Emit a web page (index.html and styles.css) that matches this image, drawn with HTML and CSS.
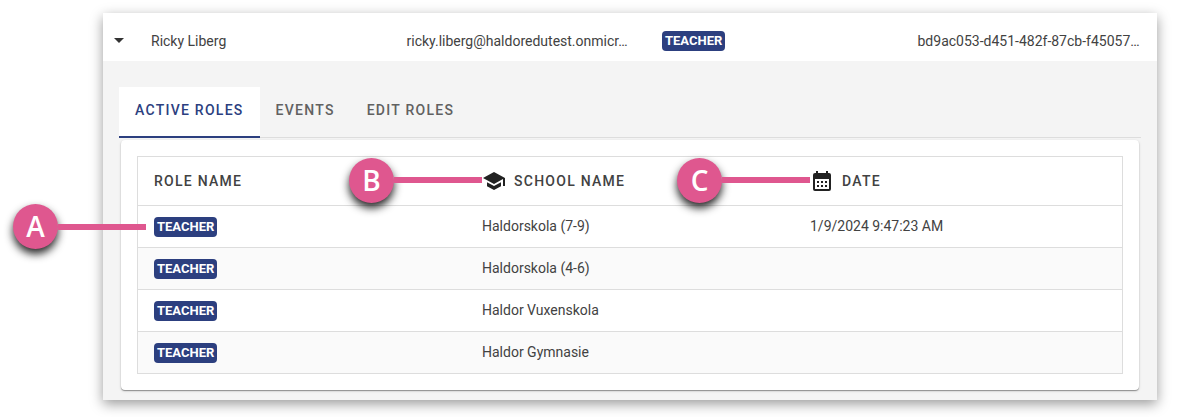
FILE: index.html
```html
<!DOCTYPE html>
<html lang="en">
<head>
  <meta charset="UTF-8">
  <title>User roles</title>
  <link rel="stylesheet" href="styles.css">
</head>
<body>

  <main class="panel">
    <div class="user-row">
      <button class="toggle" aria-label="Collapse user" aria-expanded="true">
        <svg width="10" height="5" viewBox="0 0 10 5"><path d="M0 0h10L5 5z" fill="currentColor"/></svg>
      </button>
      <div class="user-cell">Ricky Liberg</div>
      <div class="user-cell">ricky.liberg@haldoredutest.onmicr…</div>
      <div class="user-cell"><span class="badge">TEACHER</span></div>
      <div class="user-cell">bd9ac053-d451-482f-87cb-f45057…</div>
    </div>

    <div class="details">
      <div class="tabs" role="tablist">
        <button class="tab active" role="tab" aria-selected="true">ACTIVE ROLES</button>
        <button class="tab" role="tab" aria-selected="false">EVENTS</button>
        <button class="tab" role="tab" aria-selected="false">EDIT ROLES</button>
      </div>

      <div class="card">
        <table class="roles">
          <thead>
            <tr>
              <th>ROLE NAME</th>
              <th>
                <div class="callout"><span class="dot">B</span><span class="line"></span></div>
                <div class="heading">
                  <svg class="icon" viewBox="0 0 24 24"><path d="M5 13.18v4L12 21l7-3.82v-4L12 17l-7-3.82zM12 3L1 9l11 6 9-4.91V17h2V9L12 3z" fill="currentColor"/></svg>
                  SCHOOL NAME
                </div>
              </th>
              <th>
                <div class="callout"><span class="dot">C</span><span class="line"></span></div>
                <div class="heading">
                  <svg class="icon" viewBox="0 0 24 24"><path fill-rule="evenodd" d="M19 4h-1V2h-2v2H8V2H6v2H5a2 2 0 0 0-2 2v14a2 2 0 0 0 2 2h14a2 2 0 0 0 2-2V6a2 2 0 0 0-2-2zM19 20H5V10h14zM7 12h2v2H7zM11 12h2v2h-2zM15 12h2v2h-2zM7 16h2v2H7zM11 16h2v2h-2zM15 16h2v2h-2z" fill="currentColor"/></svg>
                  DATE
                </div>
              </th>
            </tr>
          </thead>
          <tbody>
            <tr>
              <td>
                <div class="callout callout-edge"><span class="dot">A</span><span class="line"></span></div>
                <span class="badge">TEACHER</span>
              </td>
              <td>Haldorskola (7-9)</td>
              <td>1/9/2024 9:47:23 AM</td>
            </tr>
            <tr>
              <td><span class="badge">TEACHER</span></td>
              <td>Haldorskola (4-6)</td>
              <td></td>
            </tr>
            <tr>
              <td><span class="badge">TEACHER</span></td>
              <td>Haldor Vuxenskola</td>
              <td></td>
            </tr>
            <tr>
              <td><span class="badge">TEACHER</span></td>
              <td>Haldor Gymnasie</td>
              <td></td>
            </tr>
          </tbody>
        </table>
      </div>
    </div>
  </main>

</body>
</html>
```
FILE: styles.css
```css
* {
  box-sizing: border-box;
}

body {
  margin: 0;
  padding: 13px 21px 17px 103px;
  background: white;
  color: #424242;
  font-family: Roboto, sans-serif;
  font-size: 14px;
}

button {
  border: none;
  background: none;
  font-family: inherit;
  cursor: pointer;
}

.panel {
  background: #f4f4f4;
  box-shadow: 0 4px 12px rgba(0, 0, 0, 0.4);
}

.user-row {
  display: grid;
  grid-template-columns: 32px repeat(4, minmax(0, 1fr));
  align-items: center;
  height: 48px;
  padding-top: 7px;
  background: white;
}

.user-cell {
  padding: 0 16px;
  line-height: 20px;
  white-space: nowrap;
}

.toggle {
  display: flex;
  justify-content: center;
  padding: 0;
  color: #333;
}

.badge {
  display: block;
  width: fit-content;
  padding: 0 3px;
  border-radius: 4px;
  background: #2c3f7f;
  color: white;
  font-size: 13px;
  font-weight: 700;
  line-height: 20px;
}

.details {
  padding: 26px 16px 10px;
}

.tabs {
  display: flex;
  border-bottom: 1px solid #ddd;
}

.tab {
  height: 51px;
  margin-bottom: -1px;
  padding: 0 16px 3px;
  border-bottom: 2px solid transparent;
  color: #616161;
  font-size: 14px;
  font-weight: 500;
  letter-spacing: 0.09em;
}

.tab.active {
  border-color: #2c3f7f;
  background: white;
  color: #2c3f7f;
}

.card {
  margin: 2px 2px 0;
  padding: 16px;
  border-radius: 4px;
  background: white;
  box-shadow: 0 1px 1px rgba(0, 0, 0, 0.35), 0 1px 3px rgba(0, 0, 0, 0.15);
}

.roles {
  width: 100%;
  border: 1px solid #ddd;
  border-spacing: 0;
  table-layout: fixed;
}

th,
td {
  position: relative;
  padding: 0 16px;
  text-align: left;
}

th {
  height: 48px;
  font-weight: 500;
  letter-spacing: 0.09em;
}

td {
  height: 42px;
  border-top: 1px solid #ddd;
}

td + td {
  padding-bottom: 2px;
}

tbody tr:nth-child(even) {
  background: #fafafa;
}

.heading {
  display: flex;
  align-items: center;
  gap: 8px;
}

.icon {
  width: 24px;
  height: 24px;
  color: #222;
}

/* lettered markers pointing at the columns */
.callout {
  position: absolute;
  z-index: 1;
  top: 0;
  bottom: 2px;
  right: calc(100% - 16px);
  display: flex;
  align-items: center;
  width: 133px;
}

.callout-edge {
  bottom: 0;
  right: calc(100% - 8px);
}

.dot {
  width: 45px;
  height: 45px;
  border-radius: 50%;
  background: #df578f;
  box-shadow: 0 5px 8px rgba(0, 0, 0, 0.85);
  color: white;
  font-family: "Open Sans", sans-serif;
  font-size: 28px;
  font-weight: 600;
  letter-spacing: 0;
  line-height: 45px;
  text-align: center;
}

.line {
  flex: 1;
  height: 6px;
  background: #df578f;
}
```
